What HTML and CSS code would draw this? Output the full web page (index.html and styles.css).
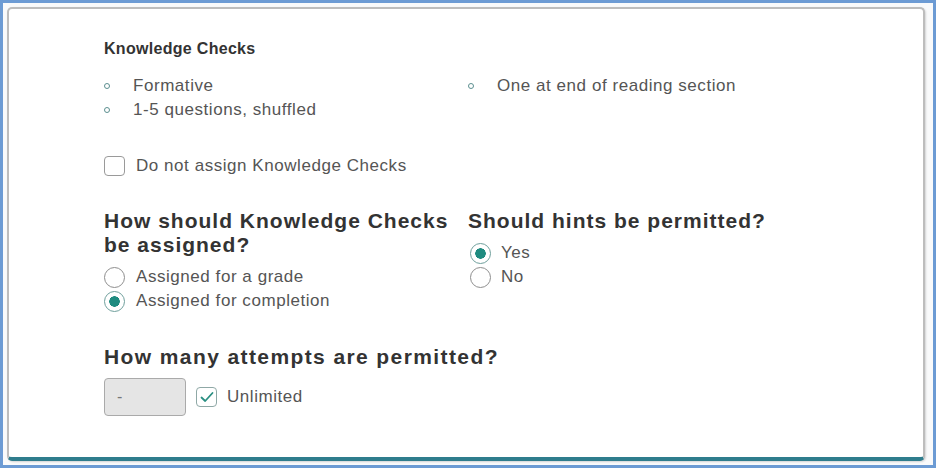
FILE: index.html
```html
<!DOCTYPE html>
<html lang="en">
<head>
    <meta charset="UTF-8">
    <meta name="viewport" content="width=device-width, initial-scale=1.0">
    <title>Knowledge Checks</title>
    <link rel="stylesheet" href="styles.css">
</head>
<body>

    <div class="card">
        <!-- Summary -->
        <h2 class="title">Knowledge Checks</h2>
        <div class="bullets">
            <ul>
                <li>Formative</li>
                <li>1-5 questions, shuffled</li>
            </ul>
            <ul>
                <li>One at end of reading section</li>
            </ul>
        </div>

        <label class="check-row">
            <span class="box"></span>
            Do not assign Knowledge Checks
        </label>

        <!-- Options -->
        <div class="options">
            <div class="group">
                <h3>How should Knowledge Checks be assigned?</h3>
                <label class="radio-row"><span class="radio"></span>Assigned for a grade</label>
                <label class="radio-row"><span class="radio on"></span>Assigned for completion</label>
            </div>
            <div class="group">
                <h3>Should hints be permitted?</h3>
                <label class="radio-row"><span class="radio on"></span>Yes</label>
                <label class="radio-row"><span class="radio"></span>No</label>
            </div>
        </div>

        <h3 class="attempts-title">How many attempts are permitted?</h3>
        <div class="attempts">
            <div class="field">-</div>
            <span class="box checked">
                <svg width="14" height="12" viewBox="0 0 14 12"><path d="M1.5 6.5 L5.2 10 L12.5 2" fill="none" stroke="#2a8f82" stroke-width="1.8" stroke-linecap="round" stroke-linejoin="round"/></svg>
            </span>
            <span class="unlimited">Unlimited</span>
        </div>
    </div>

</body>
</html>
```

FILE: styles.css
```css
html, body {
    margin: 0;
    height: 100%;
}

body {
    box-sizing: border-box;
    height: 468px;
    border: 3px solid #6c9bd4;
    padding: 4px 8px 4px 4px;
    background-color: #f9fafb;
    font-family: "Liberation Sans", Arial, sans-serif;
    color: #555;
}

.card {
    box-sizing: border-box;
    height: 100%;
    background-color: #fff;
    border: 2px solid #bdbdbd;
    border-bottom: 4px solid #2f7d8d;
    border-radius: 5px;
    box-shadow: 1px 1px 2px rgba(0, 0, 0, 0.15);
    padding: 30px 0 0 95px;
}

.title {
    margin: 0;
    font-size: 16px;
    line-height: 20px;
    letter-spacing: 0.3px;
    font-weight: bold;
    color: #333;
}

.bullets {
    display: grid;
    grid-template-columns: 364px 364px;
    margin-top: 15px;
}

.bullets ul {
    list-style: none;
    margin: 0;
    padding: 0;
}

.bullets li {
    position: relative;
    padding-left: 29px;
    font-size: 17px;
    line-height: 24px;
    letter-spacing: 0.55px;
}

.bullets li::before {
    content: "";
    position: absolute;
    left: 0;
    top: 9px;
    width: 4px;
    height: 4px;
    border: 1.5px solid #5c8f90;
    border-radius: 50%;
}

.check-row {
    display: flex;
    align-items: center;
    gap: 11px;
    margin-top: 32px;
    height: 24px;
    font-size: 17px;
    letter-spacing: 0.55px;
}

.box {
    box-sizing: border-box;
    width: 21px;
    height: 20px;
    border: 1.5px solid #9a9a9a;
    border-radius: 4px;
    background: #fff;
    display: inline-flex;
    align-items: center;
    justify-content: center;
}

.options {
    display: grid;
    grid-template-columns: 364px 400px;
    margin-top: 31px;
}

h3 {
    margin: 0 0 8px;
    font-size: 21px;
    line-height: 24px;
    letter-spacing: 1px;
    font-weight: bold;
    color: #333;
}

.radio-row {
    display: flex;
    align-items: center;
    gap: 11px;
    height: 24px;
    font-size: 17px;
    letter-spacing: 0.55px;
}

.radio {
    box-sizing: border-box;
    width: 21px;
    height: 21px;
    border: 1.5px solid #8e8e8e;
    border-radius: 50%;
    background: #fff;
}

.radio.on {
    border-color: #6f9f9c;
    background: radial-gradient(circle, #1f8b80 0 5px, #fff 5.5px);
}

.group:last-child .radio-row {
    padding-left: 2px;
    gap: 10px;
}

.attempts-title {
    margin-top: 32px;
    margin-bottom: 9px;
    letter-spacing: 1.4px;
}

.attempts {
    display: flex;
    align-items: center;
    gap: 10px;
}

.field {
    box-sizing: border-box;
    width: 82px;
    height: 38px;
    background-color: #e5e5e5;
    border: 1.5px solid #aaa;
    border-radius: 4px;
    padding-left: 12px;
    line-height: 35px;
    font-size: 16px;
    color: #777;
}

.box.checked {
    border-color: #8fa8a6;
}

.unlimited {
    font-size: 17px;
    letter-spacing: 0.55px;
}
```
